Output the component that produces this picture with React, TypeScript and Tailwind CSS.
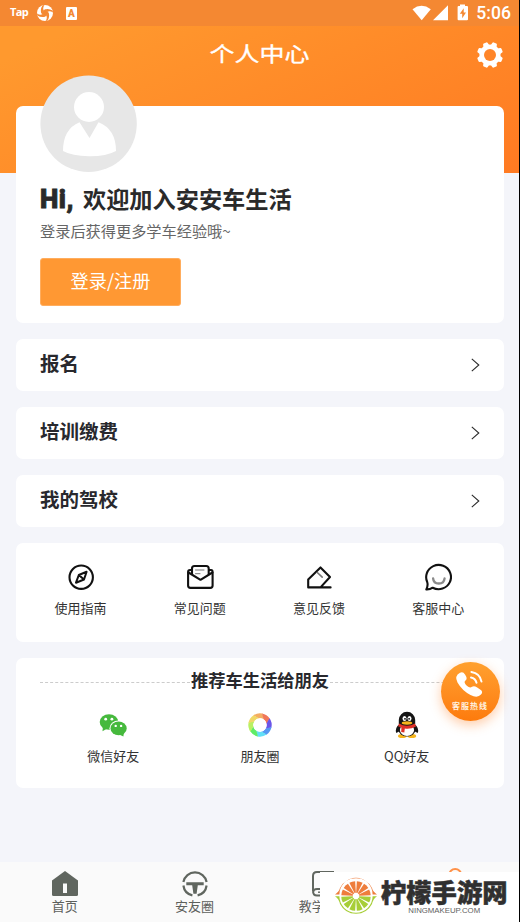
import React from "react";

const CJK = "font-['Noto_Sans_CJK_SC','Noto_Sans',sans-serif]";

function Gear() {
  return (
    <svg className="h-[26px] w-[26px]" viewBox="-13 -13 26 26" fill="#fff">
      {[22.5, 67.5, 112.5, 157.5].map((a) => (
        <path key={a} d="M-3.2 -9 L-2.4 -12.2 Q-2.2 -13 -1.4 -13 H1.4 Q2.2 -13 2.4 -12.2 L3.2 -9 V9 L2.4 12.2 Q2.2 13 1.4 13 H-1.4 Q-2.2 13 -2.4 12.2 L-3.2 9Z" transform={`rotate(${a})`} />
      ))}
      <circle r="10.6" />
      <circle r="6" fill="#ff8529" />
    </svg>
  );
}

function StatusBar() {
  return (
    <div className="flex h-[26px] items-center bg-[#f48832] pl-[10px] pr-[8px] text-white">
      <span className="h-[22px] w-[20px] font-['Open_Sans',sans-serif] text-[11px] font-bold leading-[20px] tracking-[-0.6px]">Tap</span>
      <svg className="ml-[7px] h-4 w-4" viewBox="-8 -8 16 16">
        <circle r="8" fill="#fff" />
        <g fill="#f48832">
          <path d="M0 -3.8 L3.8 0 L0 3.8 L-3.8 0Z" />
          {[0, 90, 180, 270].map((a) => (
            <path key={a} d="M-3.6 .4 Q-5 -3.6 -2.6 -7.6 L-.6 -8 Q-2.8 -4.4 -1 -2.4Z" transform={`rotate(${a})`} />
          ))}
        </g>
      </svg>
      <span className="ml-[13px] mt-px flex h-[13px] w-[11px] items-center justify-center rounded-[1px] bg-white font-['Roboto',sans-serif] text-[10px] font-black leading-none text-[#f48832]">A</span>
      <svg className="ml-auto h-[18px] w-[56px]" viewBox="0 0 56 18" fill="#fff">
        <path d="M0.5 5.2 Q9.5 -1.5 18.8 5.2 L9.7 16.2Z" />
        <path d="M36 1.2 V16.2 H21Z" />
        <path d="M48 2 V.5 H53 V2 H55 Q56 2 56 3 V15.2 Q56 16.2 55 16.2 H46.6 Q45.6 16.2 45.6 15.2 V3 Q45.6 2 46.6 2Z" />
        <path d="M51.7 4.2 L47.8 9.8 H50.2 V14.2 L54 8.6 H51.7Z" fill="#f48832" />
      </svg>
      <span className="ml-[8px] font-['Roboto',sans-serif] text-[17.6px] font-medium leading-[26px]">5:06</span>
    </div>
  );
}

function Avatar() {
  return (
    <svg className="-mt-[31px] block h-[98px] w-[98px]" viewBox="0 0 98 98">
      <circle cx="48.6" cy="48.8" r="48.2" fill="#e7e7e7" />
      <circle cx="49" cy="32" r="15" fill="#fff" />
      <path d="M39.5 47.2 L49.5 63 L58.5 47.2 Q76 54 76 76 Q66 81.5 49 81.3 Q32 81 23 76 Q23 54 39.5 47.2Z" fill="#fff" />
    </svg>
  );
}

function MenuRow({ label }: { label: string }) {
  return (
    <div className="flex h-[52px] items-center justify-between rounded-[7px] bg-white pl-6 pr-[24px]">
      <span className="-mt-[4px] text-[19.5px] font-bold leading-7 text-[#28282d]">{label}</span>
      <svg className="h-[14px] w-[9px]" viewBox="0 0 9 14" fill="none" stroke="#2b2b2b" strokeWidth="1.1">
        <path d="M.8 .8 L7.8 7 L.8 13.2" />
      </svg>
    </div>
  );
}

const line = { fill: "none", stroke: "#111", strokeWidth: 2.1, strokeLinejoin: "round" as const, strokeLinecap: "round" as const };

function Compass() {
  return (
    <svg className="h-7 w-7" viewBox="0 0 28 28" {...line}>
      <circle cx="14.2" cy="14.2" r="11.7" />
      <path d="M19.6 8.8 L17 16.5 L9 19.7 L11.8 12Z M11.8 12 L17 16.5" strokeWidth="2" />
    </svg>
  );
}
function Mail() {
  return (
    <svg className="h-7 w-7" viewBox="0 0 28 28" {...line}>
      <path d="M5.5 7 H4 Q2.1 7 2.1 9 V22.5 Q2.1 24.9 4.5 24.9 H24.3 Q26.6 24.9 26.6 22.5 V9 Q26.6 7 25 7 H23" />
      <path d="M2.5 9.5 L14.5 16.8 L26.4 9.5" />
      <path d="M6 11 V5.5 Q6 3 8.5 3 H20.2 Q22.7 3 22.7 5.5 V11" />
      <path d="M9.5 7 H18 M9.5 10.7 H14" stroke="#777" strokeWidth="1" />
    </svg>
  );
}
function Pencil() {
  return (
    <svg className="h-7 w-7" viewBox="0 0 28 28" {...line}>
      <path d="M3.2 24.4 V16.5 L15.5 4.4 L25 14 L15.5 24.4 M3.2 24.4 H25.6" />
      <path d="M12.3 9.5 L17.2 14.2" stroke="#777" strokeWidth="1.6" />
    </svg>
  );
}
function Chat() {
  return (
    <svg className="h-7 w-7" viewBox="0 0 28 28" {...line}>
      <path d="M2.3 26.4 Q4.3 22.5 3.2 19 Q1.3 14.8 2.8 10.3 A12.4 12.1 0 1 1 8.7 24.7 Q6 26.6 2.3 26.4Z" />
      <path d="M9.1 15.3 Q9.5 20.5 14.8 20.5 Q20 20.5 20.6 15.3" stroke="#8a8a8a" strokeWidth="2.3" />
    </svg>
  );
}

function WeChat() {
  return (
    <svg className="h-7 w-7" viewBox="0 0 28 28">
      <g fill="#46b93d">
        <ellipse cx="10" cy="11" rx="9.3" ry="7.8" />
        <path d="M4 15 L3.5 20.2 L9 17Z" />
      </g>
      <ellipse cx="19.5" cy="17.3" rx="9" ry="7.8" fill="#fff" />
      <ellipse cx="19.6" cy="17.4" rx="8.1" ry="6.9" fill="#46b93d" />
      <path d="M19 23 L25 21 L24.4 25.4Z" fill="#46b93d" />
      <g fill="#fff">
        <circle cx="6.7" cy="8.2" r="1.4" /><circle cx="12.9" cy="8.2" r="1.4" />
        <circle cx="16.7" cy="14.9" r="1.2" /><circle cx="22.1" cy="14.9" r="1.2" />
      </g>
    </svg>
  );
}

const blades = ["#f4ad62", "#f0775a", "#6a54e8", "#5698f2", "#62dff7", "#60ec67", "#baf062", "#f0d867"];
function Moments() {
  const at = (deg: number, r: number) => {
    const t = (deg * Math.PI) / 180;
    return `${(Math.cos(t) * r).toFixed(2)} ${(Math.sin(t) * r).toFixed(2)}`;
  };
  return (
    <svg className="h-7 w-7" viewBox="-14 -14 28 28">
      {blades.map((c, i) => {
        const a = i * 45 - 125;
        return <path key={c} fill={c} d={`M${at(a, 11.7)} A11.7 11.7 0 0 1 ${at(a + 47, 11.7)} L${at(a + 72, 6.7)} A6.7 6.7 0 0 0 ${at(a + 22, 6.7)}Z`} />;
      })}
      <circle r="6.7" fill="#fff" />
    </svg>
  );
}

function Penguin() {
  return (
    <svg className="h-7 w-7" viewBox="0 0 28 28">
      <path d="M6.5 13 Q1.5 17 3.3 22 L7 20Z M21.5 13 Q26.5 17 24.7 22 L21 20Z" fill="#151515" />
      <ellipse cx="9.3" cy="25" rx="4.3" ry="2" fill="#f6b51c" />
      <ellipse cx="18.9" cy="25" rx="4.3" ry="2" fill="#f6b51c" />
      <ellipse cx="14" cy="18.3" rx="8.6" ry="7.2" fill="#151515" />
      <ellipse cx="14" cy="19" rx="7.1" ry="6.1" fill="#fff" />
      <path d="M5.8 13 V9 A8.2 8.3 0 0 1 22.2 9 V13 Q14 19 5.8 13Z" fill="#151515" />
      <path d="M6 12.5 Q14 17 22 12.5 L23 15.5 Q17 18.5 11.8 17.5 L11.3 21.5 L8.2 21 L8.4 16.5 L5.1 15.2Z" fill="#df3028" />
      <ellipse cx="11.5" cy="7.5" rx="2" ry="2.5" fill="#fff" /><ellipse cx="16.5" cy="7.5" rx="2" ry="2.5" fill="#fff" />
      <circle cx="12" cy="7.8" r=".9" /><circle cx="16.1" cy="7.8" r=".9" />
      <ellipse cx="14" cy="12" rx="5.3" ry="1.7" fill="#f6b51c" />
    </svg>
  );
}

function Entry({ icon, label }: { icon: React.ReactNode; label: string }) {
  return (
    <div className="flex flex-1 flex-col items-center">
      {icon}
      <span className="mt-[7px] text-[13px] leading-5 text-[#333]">{label}</span>
    </div>
  );
}

function Hotline() {
  return (
    <div className="absolute left-[440.5px] top-[661.5px] flex h-[59px] w-[59px] flex-col items-center rounded-full bg-linear-to-b from-[#ffa02e] to-[#fd7b0c] shadow-[0_4px_12px_rgba(255,130,40,0.4)]">
      <svg className="-ml-[2px] mt-[8px] h-[29px] w-[30px]" viewBox="0 0 30 29">
        <path d="M6 2.8 Q9 1.2 11 4.5 Q14 8.5 11.5 10.5 Q9.5 12 12 15 Q15.5 18.8 18 16.8 Q20 15.3 23.2 17.5 L26.5 19.8 Q29.5 22 27 24.5 Q23.5 28.5 16.5 25 Q8 20.5 3.5 12.5 Q0 6 6 2.8Z" fill="#fff" />
        <path d="M17 7.5 Q21.5 8.5 22.5 12.8 M17.4 2 Q26 3.3 27.5 11.6" fill="none" stroke="#fff" strokeWidth="2" strokeLinecap="round" />
      </svg>
      <span className="mt-[1px] whitespace-nowrap text-[8px] font-bold leading-[11px] tracking-[1px] text-[#fff1df]">客服热线</span>
    </div>
  );
}

function Watermark() {
  const slices = (start: number) =>
    [0, 1, 2, 3, 4, 5].map((i) => (
      <path key={i} d="M3.2 -.7 L14.4 -3 Q15.2 0 14.4 3 L3.2 .7Z" transform={`rotate(${start + i * 30})`} />
    ));
  return (
    <div className="absolute left-[320px] top-[872px] flex h-[50px] w-[200px] bg-white pl-[14px]">
      <svg className="mt-[2px] h-[44px] w-[44px] shrink-0" viewBox="-22 -22 44 44">
        <g fill="#ee7d3c">
          <path d="M-21 -1.6 Q-17 -4 -16 -8 A18 18 0 0 1 16 -8 Q17 -4 21 -1.6 H16.6 A16.6 16.6 0 0 0 -16.6 -1.6Z" />
          {slices(195)}
        </g>
        <g fill="#a7ce38">
          <path d="M-21 .2 Q-17 3 -16 8 A18 18 0 0 0 16 8 Q17 3 21 .2 H16.6 A16.6 16.6 0 0 1 -16.6 .2Z" />
          {slices(15)}
        </g>
      </svg>
      <div className="ml-[3px] flex flex-col items-center">
        <span className="mt-[4px] whitespace-nowrap text-[25.3px] font-black leading-[30px] text-[#303030] [-webkit-text-stroke:0.5px_#303030]">柠檬手游网</span>
        <span className="whitespace-nowrap font-['Liberation_Sans',sans-serif] text-[7.8px] leading-[10px] text-[#606060]">NINGMAKEUP.COM</span>
      </div>
    </div>
  );
}

export default function App() {
  return (
    <div className={`relative flex h-[922px] w-[520px] flex-col overflow-hidden border-r border-black bg-[#f4f5fa] ${CJK}`}>
      <header className="h-[173px] shrink-0 bg-linear-[155deg] from-[#ff992e] from-15% to-[#ff7a22]">
        <StatusBar />
        <div className="flex h-[58px] items-center pr-4">
          <span className="w-[30px]" />
          <h1 className="-mt-[4px] flex-1 origin-center scale-x-[1.22] pl-[10px] text-center text-[20.5px] font-normal leading-7 text-white [-webkit-text-stroke:0.3px_white]">个人中心</h1>
          <Gear />
        </div>
      </header>

      <main className="-mt-[67px] flex flex-1 flex-col gap-[16.1px] pl-4 pr-[15px]">
        <section className="h-[216.9px] rounded-[7px] bg-white pl-6">
          <Avatar />
          <h2 className="mt-[9px] flex whitespace-nowrap text-[#2a2a2a]">
            <span className="w-[43px] pt-[2px] font-['Roboto',sans-serif] text-[26px] font-black leading-[30px] tracking-[0.5px] [-webkit-text-stroke:0.8px_#2a2a2a]">Hi,</span>
            <span className="text-[23.2px] font-bold leading-[32px]">欢迎加入安安车生活</span>
          </h2>
          <p className="mt-[5px] text-[15.2px] leading-[23px] text-[#666]">登录后获得更多学车经验哦~</p>
          <button className="mt-[16px] block h-[47.5px] w-[141px] rounded-[3px] border border-[#ffad5e] bg-[#ff9833] pb-[4px] text-[18.2px] leading-6 text-white">登录/注册</button>
        </section>

        <MenuRow label="报名" />
        <MenuRow label="培训缴费" />
        <MenuRow label="我的驾校" />

        <section className="flex h-[98.5px] rounded-[7px] bg-white pl-[5px] pr-[6px] pt-[20px]">
          <Entry icon={<Compass />} label="使用指南" />
          <Entry icon={<Mail />} label="常见问题" />
          <Entry icon={<Pencil />} label="意见反馈" />
          <Entry icon={<Chat />} label="客服中心" />
        </section>

        <section className="h-[130px] rounded-[7px] bg-white px-6 pt-[9px]">
          <div className="flex items-center">
            <span className="mt-[5px] flex-1 border-t border-dashed border-[#ccc]" />
            <h3 className="px-[1px] text-[17.3px] font-bold leading-[26px] text-[#28282d]">推荐车生活给朋友</h3>
            <span className="mt-[5px] flex-1 border-t border-dashed border-[#ccc]" />
          </div>
          <div className="mt-[18px] flex">
            <Entry icon={<WeChat />} label="微信好友" />
            <Entry icon={<Moments />} label="朋友圈" />
            <Entry icon={<Penguin />} label="QQ好友" />
          </div>
        </section>
      </main>

      <nav className="flex h-[60.5px] shrink-0 bg-[#fafafa] pt-[9px] text-[13px] leading-[18px] text-[#5d605c]">
        <div className="flex flex-1 flex-col items-center">
          <svg className="h-[26px] w-[26px]" viewBox="0 0 26 26">
            <path d="M13 0 L26 9.5 V23.5 Q26 25 24.5 25 H1.5 Q0 25 0 23.5 V9.5Z" fill="#60665f" />
            <path d="M11 12.5 H15 V22 H11Z" fill="#fafafa" />
          </svg>
          <span>首页</span>
        </div>
        <div className="flex flex-1 flex-col items-center">
          <svg className="h-[26px] w-[26px]" viewBox="0 0 26 26" fill="none" stroke="#60665f" strokeWidth="2.2">
            <path d="M1.4 11 A11.8 11.8 0 0 1 24.6 11 M1.4 14.5 A11.8 11.8 0 0 0 10.4 24.4 M15.6 24.4 A11.8 11.8 0 0 0 24.6 14.5" />
            <path d="M4.3 11.3 H21.7 V14.3 H15.8 L14.6 22.8 H11.4 L10.2 14.3 H4.3Z" fill="#60665f" stroke="none" />
          </svg>
          <span>安友圈</span>
        </div>
        <div className="flex flex-1 flex-col items-center">
          <svg className="h-[26px] w-[26px]" viewBox="0 0 26 26" fill="none" stroke="#60665f" strokeWidth="2">
            <path d="M23 1 H6 Q2 1 2 5 V20 Q2 24.5 6 24.5 H23 M2 21 Q2.5 18 6 18 H23" />
            <path d="M7 21.2 H10" strokeWidth="1.4" />
          </svg>
          <span className="pr-[25px]">教学</span>
        </div>
        <div className="flex flex-1 justify-center">
          <svg className="-mt-[3px] ml-[2px] h-[14px] w-[14px]" viewBox="0 0 14 14" fill="none" stroke="#ff9148" strokeWidth="2">
            <circle cx="7.2" cy="7" r="6" />
          </svg>
        </div>
      </nav>
      <Hotline />
      <Watermark />
    </div>
  );
}
